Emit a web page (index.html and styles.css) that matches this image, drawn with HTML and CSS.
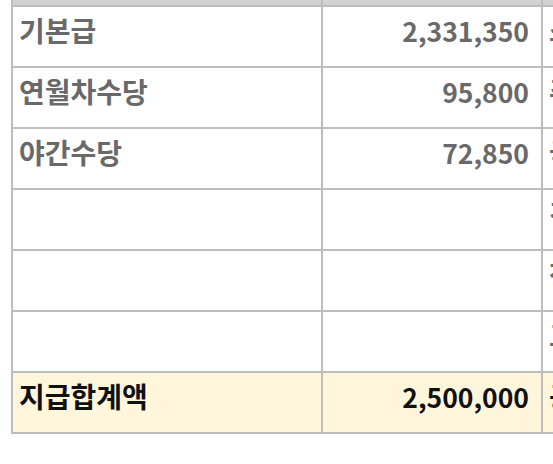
FILE: index.html
```html
<!DOCTYPE html>
<html lang="ko">
<head>
<meta charset="utf-8">
<link rel="stylesheet" href="styles.css">
</head>
<body>
<div class="wrap">
<table class="pay">
  <colgroup><col class="c1"><col class="c2"><col class="c3"></colgroup>
  <thead>
    <tr class="head"><th></th><th></th><th></th></tr>
  </thead>
  <tbody>
    <tr><td class="label">기본급</td><td class="num">2,331,350</td><td class="label">소득세</td></tr>
    <tr><td class="label">연월차수당</td><td class="num">95,800</td><td class="label">주민세</td></tr>
    <tr><td class="label">야간수당</td><td class="num">72,850</td><td class="label">국민연금</td></tr>
    <tr><td class="label"></td><td class="num"></td><td class="label">건강보험</td></tr>
    <tr><td class="label"></td><td class="num"></td><td class="label">장기요양</td></tr>
    <tr><td class="label"></td><td class="num"></td><td class="label">고용보험</td></tr>
    <tr class="total"><td class="label">지급합계액</td><td class="num">2,500,000</td><td class="label">공제합계</td></tr>
  </tbody>
</table>
</div>
</body>
</html>
```
FILE: styles.css
```css
html, body {
  margin: 0;
  padding: 0;
  background: #ffffff;
  overflow: hidden;
}
.wrap {
  width: 553px;
  height: 464px;
  overflow: hidden;
  padding-left: 11px;
  box-sizing: border-box;
}
.pay {
  border-collapse: collapse;
  table-layout: fixed;
  width: 760px;
  font-family: "Noto Sans CJK KR", "Noto Sans", sans-serif;
  font-size: 28px;
  font-weight: 700;
  color: #696969;
}
.c1 { width: 310px; }
.c2 { width: 220px; }
.c3 { width: 230px; }
.pay th, .pay td {
  border: 2px solid #bdbdbd;
  padding: 0;
  white-space: nowrap;
  overflow: hidden;
}
.head th {
  border-top: none;
  height: 5px;
  background: #d2d2d2;
}
.pay td {
  height: 61px;
  box-sizing: border-box;
  vertical-align: top;
  padding-top: 5px;
  line-height: 36px;
}
.label {
  text-align: left;
  padding-left: 6px !important;
}
.num {
  text-align: right;
  font-size: 26.5px;
  padding-top: 6px !important;
  padding-right: 12px !important;
}
.total td {
  background: #fff6dc;
  color: #111111;
}
```
